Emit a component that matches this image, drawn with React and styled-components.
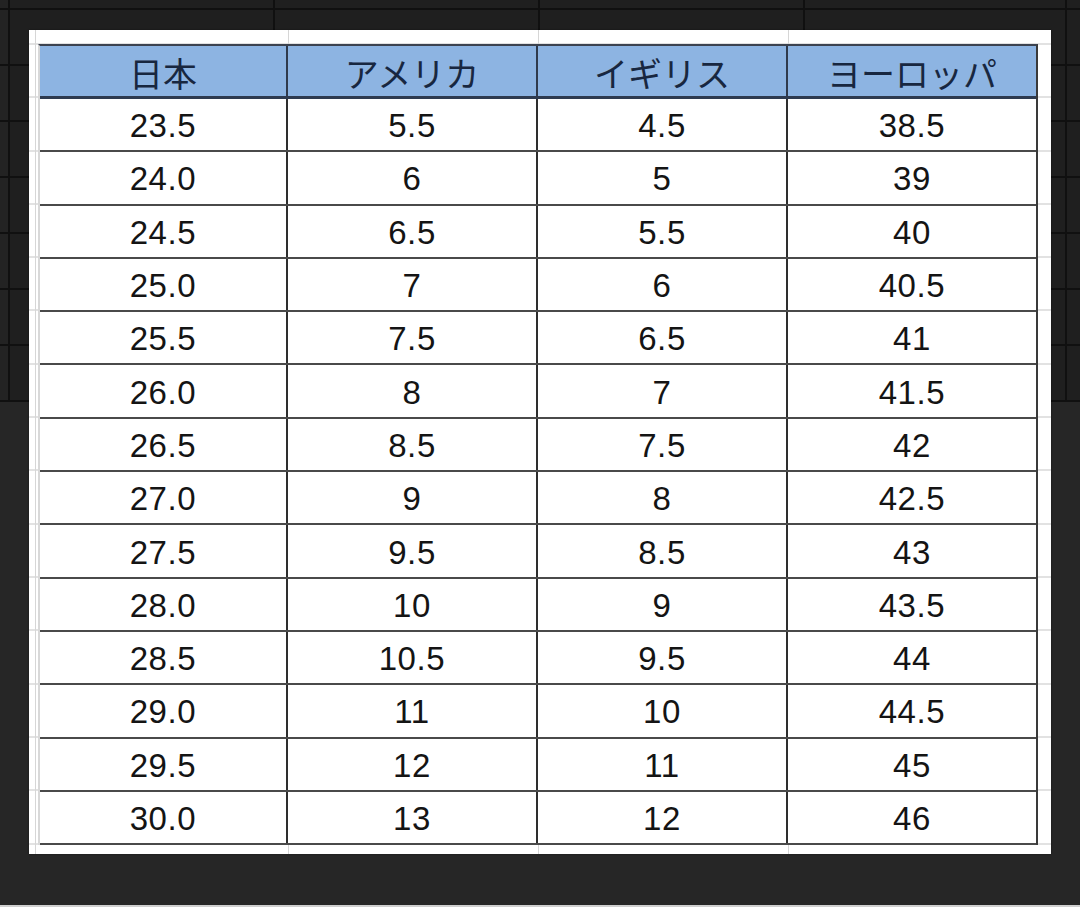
import React from "react";
import styled, { createGlobalStyle } from "styled-components";

const GlobalStyle = createGlobalStyle`
  html, body {
    margin: 0;
    padding: 0;
    background: #262626;
  }
  body {
    font-family: "Liberation Sans", Arial, sans-serif;
  }
`;

const headers = ["日本", "アメリカ", "イギリス", "ヨーロッパ"];

const rows = [
  ["23.5", "5.5", "4.5", "38.5"],
  ["24.0", "6", "5", "39"],
  ["24.5", "6.5", "5.5", "40"],
  ["25.0", "7", "6", "40.5"],
  ["25.5", "7.5", "6.5", "41"],
  ["26.0", "8", "7", "41.5"],
  ["26.5", "8.5", "7.5", "42"],
  ["27.0", "9", "8", "42.5"],
  ["27.5", "9.5", "8.5", "43"],
  ["28.0", "10", "9", "43.5"],
  ["28.5", "10.5", "9.5", "44"],
  ["29.0", "11", "10", "44.5"],
  ["29.5", "12", "11", "45"],
  ["30.0", "13", "12", "46"],
];

// the spreadsheet that peeks out behind the screenshot
const backCols = [10, 265, 265, 265, 262, 13];
const backRows = [10, 56, 56, 56, 56, 56, 56, 56];

const Page = styled.div`
  position: relative;
  width: 1080px;
  height: 905px;
  overflow: hidden;
  background: #262626;
`;

const BottomBar = styled.div`
  width: 1080px;
  height: 2px;
  background: #cfcfcf;
`;

const Backdrop = styled.div`
  display: grid;
  grid-template-columns: ${backCols.map((c) => c + "px").join(" ")};
  grid-template-rows: ${backRows.map((r) => r + "px").join(" ")};
  background: #1f1f1f;
  width: 1080px;
`;

const BackCell = styled.div`
  box-sizing: border-box;
  border-right: ${(p) => (p.$last ? "none" : "2px solid #101010")};
  border-bottom: 2px solid #101010;
  background: ${(p) => (p.$edge ? "#232323" : "transparent")};
`;

const Sheet = styled.div`
  position: absolute;
  left: 29px;
  top: 30px;
  width: 1022px;
  height: 824px;
  box-sizing: border-box;
  padding: 14px 13px 0 9px;
  background-color: #fff;
  background-image:
    linear-gradient(to right, transparent 6px, #d6d6d6 6px, #d6d6d6 7px, transparent 7px),
    linear-gradient(to right, transparent 259px, #d6d6d6 259px, #d6d6d6 260px, transparent 260px),
    linear-gradient(to right, transparent 509px, #d6d6d6 509px, #d6d6d6 510px, transparent 510px),
    linear-gradient(to right, transparent 759px, #d6d6d6 759px, #d6d6d6 760px, transparent 760px),
    repeating-linear-gradient(to bottom, transparent 0, transparent 13px, #e2e2e2 13px, #e2e2e2 15px, transparent 15px, transparent 53.3px);
  box-shadow: 0 0 2px rgba(0, 0, 0, 0.4);
`;

const Table = styled.div`
  width: 1000px;
  box-sizing: border-box;
  border-top: 2px solid #3c4350;
  border-right: 2px solid #3a3a3a;
  border-left: 2px solid #d8d8d8;
`;

const HeaderRow = styled.div`
  display: grid;
  grid-template-columns: 248px 250px 250px 248px;
  height: 53px;
  box-sizing: border-box;
  background: #8db4e2;
  border-bottom: 3px solid #2e3b50;
`;

const Row = styled.div`
  display: grid;
  grid-template-columns: 248px 250px 250px 248px;
  height: 53.3px;
  box-sizing: border-box;
  background: #fff;
  border-bottom: 2px solid #4a4a4a;
`;

const Cell = styled.div`
  box-sizing: border-box;
  display: flex;
  align-items: center;
  justify-content: center;
  border-right: ${(p) => (p.$last ? "none" : "2px solid #2e2e2e")};
  padding-top: 3px;
  font-size: 33px;
  letter-spacing: 0.6px;
  color: #141414;
`;

const HeadCell = styled(Cell)`
  font-family: "Noto Sans CJK JP", "Noto Sans", sans-serif;
  font-size: 34px;
  letter-spacing: 0;
  color: #182740;
  padding-top: 2px;
  border-right: ${(p) => (p.$last ? "none" : "2px solid #2f3a4c")};
`;

export default function App() {
  return (
    <>
      <GlobalStyle />
      <Page>
        <Backdrop>
          {backRows.map((_, r) =>
            backCols.map((_, c) => (
              <BackCell
                key={r + "-" + c}
                $last={c === backCols.length - 1}
                $edge={c === 0}
              />
            ))
          )}
        </Backdrop>

        <Sheet>
          <Table>
            <HeaderRow>
              {headers.map((h, i) => (
                <HeadCell key={h} $last={i === headers.length - 1}>
                  {h}
                </HeadCell>
              ))}
            </HeaderRow>
            {rows.map((row, r) => (
              <Row key={r}>
                {row.map((v, i) => (
                  <Cell key={i} $last={i === row.length - 1}>
                    {v}
                  </Cell>
                ))}
              </Row>
            ))}
          </Table>
        </Sheet>
      </Page>
      <BottomBar />
    </>
  );
}
